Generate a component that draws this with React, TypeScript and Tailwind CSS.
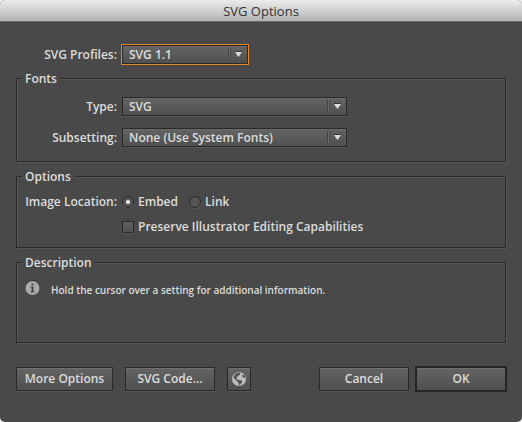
import { useState, type ReactNode } from "react";

const groupStyle =
  "min-w-0 border border-[#292929] px-0 shadow-[1px_1px_0_#565656,inset_1px_1px_0_#565656]";
const buttonStyle =
  "h-6 border border-[#292929] bg-linear-to-b from-[#646464] to-[#505050] shadow-[0_1px_0_#565656,inset_0_1px_0_#707070] text-center";
const labelStyle = "w-[101px] shrink-0 pr-px text-right";

function Group({ title, className, children }: { title: string; className: string; children: ReactNode }) {
  return (
    <fieldset className={`${groupStyle} ${className}`}>
      <legend className="ml-[5px] h-[17px] bg-[#494949] px-[3px] leading-[17px]">{title}</legend>
      {children}
    </fieldset>
  );
}

function SelectRow({
  id,
  label,
  options,
  width,
  focused = false,
}: {
  id: string;
  label: string;
  options: string[];
  width: string;
  focused?: boolean;
}) {
  return (
    <div className="flex items-center gap-1">
      <label htmlFor={id} className={labelStyle}>
        {label}
      </label>
      <div className={`relative h-[19px] ${width} ${focused ? "outline-1 outline-[#e58a26]" : ""}`}>
        <select
          id={id}
          className="block h-[19px] w-full appearance-none border border-[#292929] bg-linear-to-b from-[#646464] to-[#505050] pr-5 pl-[6px] leading-[17px] shadow-[0_1px_0_#565656,inset_0_1px_0_#6a6a6a] outline-none"
        >
          {options.map((option) => (
            <option key={option}>{option}</option>
          ))}
        </select>
        <svg
          aria-hidden="true"
          viewBox="0 0 20 17"
          className="pointer-events-none absolute top-px right-px h-[17px] w-5"
        >
          <path d="M1.5 2v12" stroke="#424242" />
          <path d="M2.5 2v12" stroke="#6c6c6c" />
          <path d="M3.5 2v12" stroke="#4a4a4a" />
          <path d="M8 5.5h7" stroke="#333" />
          <path d="M8 6h7l-3.500 5z" fill="#dedede" />
        </svg>
      </div>
    </div>
  );
}

const radioStyle =
  "size-3 shrink-0 appearance-none rounded-full border border-[#292929] bg-[#555] shadow-[0_1px_0_#5c5c5c] checked:bg-[radial-gradient(circle,#e6e6e6_0_1.5px,#555_2.5px)]";

export default function App() {
  const [location, setLocation] = useState("embed");
  return (
    <div className="min-h-screen bg-[#f4f4f4]">
      <main className="flex min-h-screen flex-col overflow-hidden rounded-[5px] bg-[#494949] font-['Open_Sans','Noto_Sans',sans-serif] text-[12px] font-semibold text-[#dcdcdc]">
        <header className="h-[22px] border-b border-[#686868] bg-linear-to-b from-[#ececec] to-[#b4b4b4] text-center text-[13px] leading-[22px] font-normal text-[#333]">
          <h1>SVG Options</h1>
        </header>
        <form className="px-4 pt-[23px]" onSubmit={(e) => e.preventDefault()}>
          <div className="pl-px">
            <SelectRow id="profiles" label="SVG Profiles:" options={["SVG 1.1"]} width="w-[126px]" focused />
          </div>
          <Group title="Fonts" className="mt-[6px] pb-[14px]">
            <div className="flex flex-col gap-3 pt-[10px]">
              <SelectRow id="type" label="Type:" options={["SVG"]} width="w-[225px]" />
              <SelectRow id="subset" label="Subsetting:" options={["None (Use System Fonts)"]} width="w-[225px]" />
            </div>
          </Group>
          <Group title="Options" className="mt-[6px] pb-[11px]">
            <div className="flex flex-col gap-[6px] pt-[7px]">
              <div className="flex h-[19px] items-center gap-1" role="radiogroup" aria-labelledby="location">
                <span id="location" className={labelStyle}>
                  Image Location:
                </span>
                <label className="flex items-center gap-1">
                  <input
                    type="radio"
                    name="location"
                    className={radioStyle}
                    checked={location === "embed"}
                    onChange={() => setLocation("embed")}
                  />
                  Embed
                </label>
                <label className="ml-[7px] flex items-center gap-1">
                  <input
                    type="radio"
                    name="location"
                    className={radioStyle}
                    checked={location === "link"}
                    onChange={() => setLocation("link")}
                  />
                  Link
                </label>
              </div>
              <label className="ml-[105px] flex h-[19px] items-center gap-1">
                <input
                  type="checkbox"
                  className="size-3 shrink-0 appearance-none border border-[#292929] bg-linear-to-b from-[#606060] to-[#505050] shadow-[0_1px_0_#565656] checked:from-[#ddd] checked:to-[#ccc]"
                />
                Preserve Illustrator Editing Capabilities
              </label>
            </div>
          </Group>
          <Group title="Description" className="mt-[6px]">
            <div className="flex min-h-[71px] items-start gap-[11px] px-2 pt-[9px]">
              <svg aria-hidden="true" viewBox="0 0 15 15" className="size-[15px] shrink-0">
                <circle cx="7.500" cy="7" r="7" fill="#303030" />
                <circle cx="7.500" cy="8" r="7" fill="#aaa" />
                <path d="M6.500 3.500h2v2h-2zM5.500 6.500h3v5h1v1h-4v-1h1v-4h-1z" fill="#444" />
              </svg>
              <p className="text-[10px] leading-[21px]">
                Hold the cursor over a setting for additional information.
              </p>
            </div>
          </Group>
          <div className="-mr-px mt-[23px] mb-[30px] flex items-center">
            <button type="button" className={`${buttonStyle} w-[97px]`}>
              More Options
            </button>
            <button type="button" className={`${buttonStyle} ml-3 w-[90px]`}>
              SVG Code...
            </button>
            <button type="button" aria-label="Preview in browser" className={`${buttonStyle} ml-3 flex w-6 items-center justify-center`}>
              <svg aria-hidden="true" viewBox="0 0 14 14" className="size-[14px]">
                <circle cx="7" cy="7" r="7" fill="#bdbdbd" />
                <path d="M3.500 1.500 7 .5l1.500 1-1 1.500L6 4 5 5.500 4 6l1.500 1.500L7 8l3 .5v2L8 13l-1 .5-.5-2.500L5 9 2.500 7 1.500 5zM10 3l2-.5 1.500 3L12 6l-1.500-1z" fill="#555" />
              </svg>
            </button>
            <button type="button" className={`${buttonStyle} ml-auto w-[90px]`}>
              Cancel
            </button>
            <button
              type="submit"
              className="ml-[6px] h-[26px] w-[92px] border-2 border-[#252525] bg-linear-to-b from-[#646464] to-[#505050] text-center shadow-[inset_0_1px_0_#707070]"
            >
              OK
            </button>
          </div>
        </form>
      </main>
    </div>
  );
}
